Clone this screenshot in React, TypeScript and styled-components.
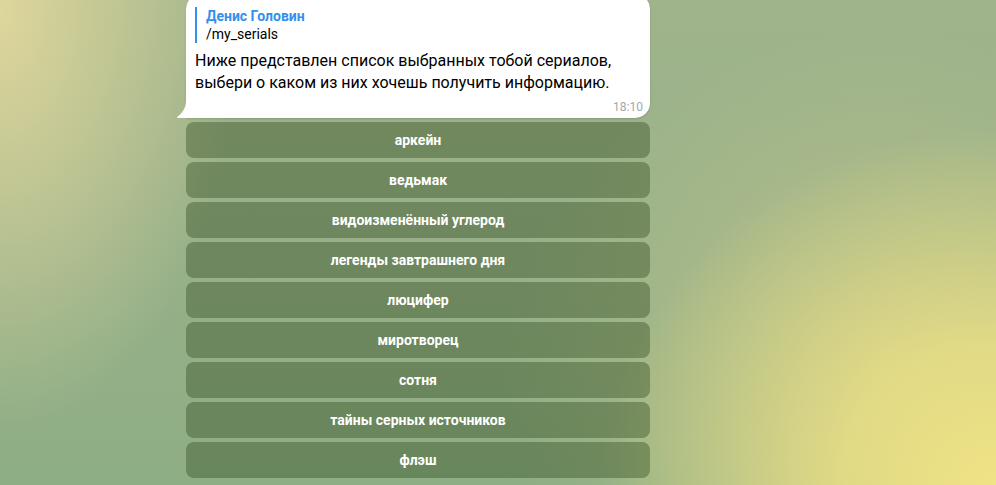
import React from "react";
import styled, { createGlobalStyle } from "styled-components";

const Global = createGlobalStyle`
  html, body { margin: 0; padding: 0; }
  body {
    width: 996px;
    height: 485px;
    overflow: hidden;
    font-family: Roboto, "Noto Sans", sans-serif;
  }
`;

const Wallpaper = styled.div`
  width: 996px;
  height: 485px;
  overflow: hidden;
  background:
    radial-gradient(ellipse 400px 360px at 1000px 490px, rgba(240, 227, 132, 1) 0%, rgba(238, 225, 133, 0.8) 40%, rgba(236, 223, 134, 0) 100%),
    radial-gradient(ellipse 240px 420px at 0px 10px, rgba(222, 214, 156, 1) 0%, rgba(222, 214, 156, 0) 100%),
    radial-gradient(ellipse 380px 330px at 880px 360px, rgba(206, 204, 138, 0.6) 0%, rgba(206, 204, 138, 0) 100%),
    linear-gradient(180deg, #a0b48b 0%, #97b089 50%, #8eae86 100%);
`;

const Column = styled.div`
  width: 464px;
  margin-left: 186px;
  margin-top: -6px;
  display: flex;
  flex-direction: column;
`;

const Bubble = styled.div`
  position: relative;
  background: #ffffff;
  border-radius: 15px 15px 15px 0;
  padding: 13px 7px 4px 9px;
  box-shadow: 0 1px 2px rgba(16, 35, 47, 0.15);
`;

const Tail = styled.svg`
  position: absolute;
  left: -9px;
  bottom: 0;
  width: 9px;
  height: 17px;
`;

const Quote = styled.div`
  border-left: 2px solid #3390ec;
  padding-left: 9px;
  display: flex;
  flex-direction: column;
`;

const Sender = styled.div`
  color: #3390ec;
  font-weight: 700;
  font-size: 14px;
  line-height: 18px;
`;

const Command = styled.div`
  color: #000;
  font-size: 14px;
  line-height: 18px;
`;

const Text = styled.div`
  margin-top: 7px;
  color: #000;
  font-size: 16px;
  line-height: 22px;
`;

const Meta = styled.div`
  display: flex;
  justify-content: flex-end;
  margin-top: 6px;
  color: #a3a7ab;
  font-size: 12px;
  line-height: 14px;
`;

const Keyboard = styled.div`
  display: flex;
  flex-direction: column;
  gap: 4px;
  margin-top: 4px;
`;

const KeyButton = styled.div`
  height: 36px;
  border-radius: 8px;
  background: rgba(42, 64, 22, 0.37);
  color: #fff;
  font-weight: 700;
  font-size: 14px;
  display: flex;
  align-items: center;
  justify-content: center;
`;

const serials = [
  "аркейн",
  "ведьмак",
  "видоизменённый углерод",
  "легенды завтрашнего дня",
  "люцифер",
  "миротворец",
  "сотня",
  "тайны серных источников",
  "флэш",
];

export default function App() {
  return (
    <Wallpaper>
      <Global />
      <Column>
        <Bubble>
          <Tail viewBox="0 0 9 17">
            <path d="M9 0 V17 H0.5 C0 17 -0.2 16.4 0.3 16 C5 12.5 9 7 9 0 Z" fill="#ffffff" />
          </Tail>
          <Quote>
            <Sender>Денис Головин</Sender>
            <Command>/my_serials</Command>
          </Quote>
          <Text>
            Ниже представлен список выбранных тобой сериалов,
            <br />
            выбери о каком из них хочешь получить информацию.
          </Text>
          <Meta>18:10</Meta>
        </Bubble>
        <Keyboard>
          {serials.map((s) => (
            <KeyButton key={s}>{s}</KeyButton>
          ))}
        </Keyboard>
      </Column>
    </Wallpaper>
  );
}
